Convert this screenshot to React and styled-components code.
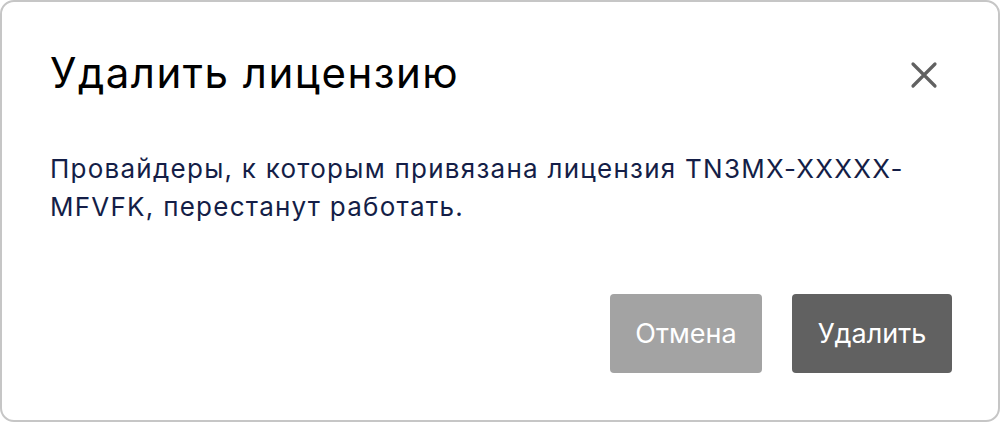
import React from "react";
import styled, { createGlobalStyle } from "styled-components";

const Global = createGlobalStyle`
  html, body { margin: 0; padding: 0; background: #ffffff; }
  body { font-family: Inter, Roboto, "Liberation Sans", sans-serif; }
  * { box-sizing: border-box; }
`;

const Dialog = styled.div`
  width: 1000px;
  height: 422px;
  border: 2px solid #c6c6c6;
  border-radius: 14px;
  background: #fff;
  padding: 41px 46px 47px 48px;
  display: flex;
  flex-direction: column;
`;

const Header = styled.div`
  display: flex;
  align-items: center;
  justify-content: space-between;
`;

const Title = styled.h2`
  margin: 0;
  font-size: 42px;
  line-height: 60px;
  font-weight: 400;
  letter-spacing: 1.5px;
  color: #000;
`;

const CloseButton = styled.button`
  border: none;
  background: none;
  padding: 0;
  width: 34px;
  height: 34px;
  display: flex;
  align-items: center;
  justify-content: center;
  margin-right: 11px;
  margin-top: 3px;
  cursor: pointer;
`;

const Message = styled.p`
  margin: 47px 0 0;
  font-size: 26px;
  line-height: 38px;
  letter-spacing: 1.25px;
  color: #141e47;
  flex: 1;
`;

const Footer = styled.div`
  display: flex;
  justify-content: flex-end;
  gap: 30px;
`;

const Button = styled.button`
  height: 79px;
  min-width: ${(p) => p.$w}px;
  border: none;
  border-radius: 4px;
  font-family: Inter, Roboto, "Liberation Sans", sans-serif;
  font-size: 27px;
  color: #fff;
  background: ${(p) => (p.$primary ? "#616161" : "#a3a3a3")};
  cursor: pointer;
`;

export default function App() {
  return (
    <>
      <Global />
      <Dialog>
        <Header>
          <Title>Удалить лицензию</Title>
          <CloseButton aria-label="Закрыть">
            <svg width="28" height="28" viewBox="0 0 28 28">
              <path d="M3 3 L25 25 M25 3 L3 25" stroke="#616161" strokeWidth="3.2" strokeLinecap="round" />
            </svg>
          </CloseButton>
        </Header>
        <Message>
          Провайдеры, к которым привязана лицензия TN3MX-XXXXX-MFVFK, перестанут работать.
        </Message>
        <Footer>
          <Button $w={152}>Отмена</Button>
          <Button $w={160} $primary>Удалить</Button>
        </Footer>
      </Dialog>
    </>
  );
}
